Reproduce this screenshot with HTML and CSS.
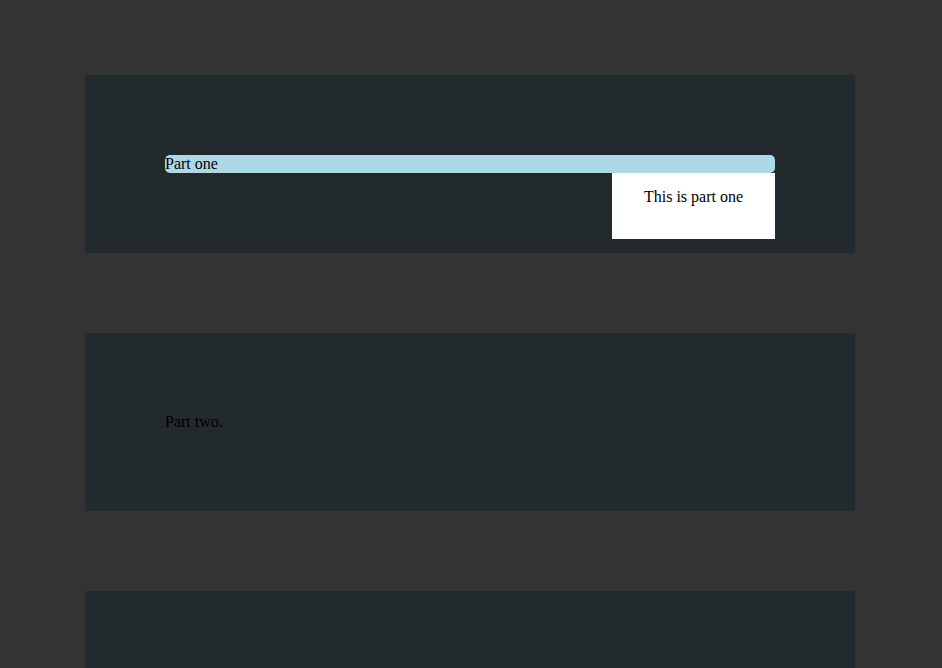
FILE: index.html
```html
<!DOCTYPE html>
<html>
<head>
<meta charset="utf-8">
<link rel="stylesheet" href="styles.css">
</head>
<body>
<div class="page">
  <section class="part">
    <div class="bar">Part one
      <div class="popup">This is part one</div>
    </div>
  </section>
  <section class="part">
    <div class="plain">Part two.</div>
  </section>
  <section class="part">
    <div class="plain"></div>
  </section>
</div>
</body>
</html>
```
FILE: styles.css
```css
html, body {
  margin: 0;
  padding: 0;
  background: #333333;
  height: 100%;
  overflow: hidden;
}
body {
  font-family: "Liberation Serif", "Times New Roman", serif;
  font-size: 16px;
  line-height: 18px;
  color: #000;
}
.page {
  padding-top: 75px;
  padding-left: 85px;
}
.part {
  width: 610px;
  padding: 80px;
  background: #232a2e;
  margin-bottom: 80px;
}
.bar {
  position: relative;
  height: 18px;
  background: #add8e6;
  border-radius: 5px;
}
.popup {
  position: absolute;
  right: 0;
  top: 18px;
  width: 163px;
  height: 51px;
  padding-top: 15px;
  background: #ffffff;
  text-align: center;
}
.plain {
  height: 18px;
}
```
